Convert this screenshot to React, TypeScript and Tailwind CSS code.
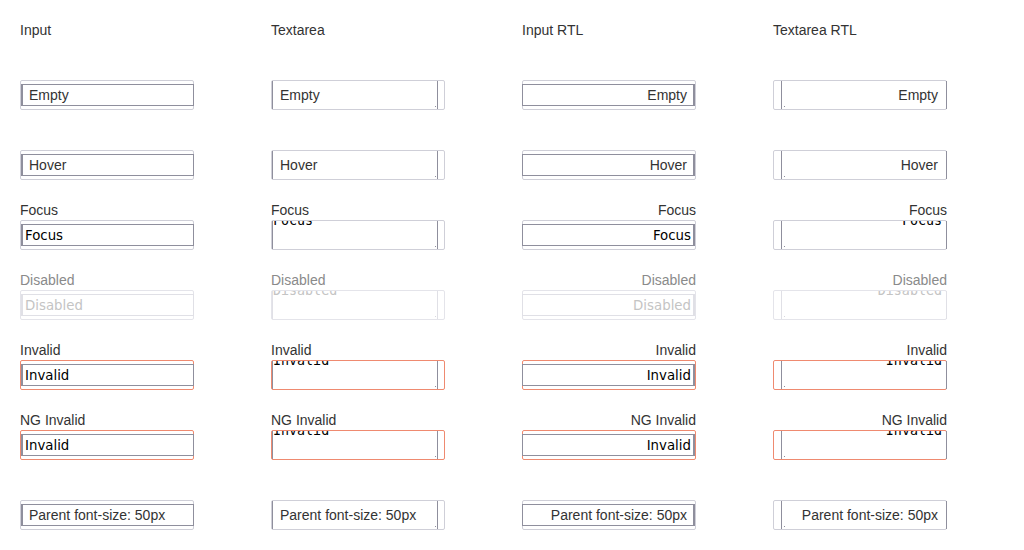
type State = "empty" | "hover" | "focus" | "disabled" | "invalid" | "ng" | "parent";

interface Row {
  state: State;
  label: string;
  text: string;
}

const rows: Row[] = [
  { state: "empty", label: "", text: "Empty" },
  { state: "hover", label: "", text: "Hover" },
  { state: "focus", label: "Focus", text: "Focus" },
  { state: "disabled", label: "Disabled", text: "Disabled" },
  { state: "invalid", label: "Invalid", text: "Invalid" },
  { state: "ng", label: "NG Invalid", text: "Invalid" },
  { state: "parent", label: "", text: "Parent font-size: 50px" },
];

const columns = [
  { title: "Input", kind: "input", rtl: false },
  { title: "Textarea", kind: "textarea", rtl: false },
  { title: "Input RTL", kind: "input", rtl: true },
  { title: "Textarea RTL", kind: "textarea", rtl: true },
] as const;

// placeholder-looking rows use the page font, the rest look like typed values
const isPlain = (s: State) => s === "empty" || s === "hover" || s === "parent";

function outerBorder(s: State) {
  if (s === "invalid" || s === "ng") return "border-[#ef8a70]";
  if (s === "disabled") return "border-[#e4e4ea]";
  return "border-[#cfcfd8]";
}

function innerBorder(s: State) {
  return s === "disabled" ? "border-[#e0e0e6]" : "border-[#8f8f9d]";
}

function InputBox({ row, rtl }: { row: Row; rtl: boolean }) {
  const plain = isPlain(row.state);
  const textCls = plain
    ? "font-['Liberation_Sans'] text-[14px] text-[#333]"
    : row.state === "disabled"
      ? "pt-[2px] font-['DejaVu_Sans'] text-[13.33px] text-[#c4c4c4]"
      : "pt-[2px] font-['DejaVu_Sans'] text-[13.33px] text-black";
  const pad = rtl ? (plain ? "pr-[6px]" : "pr-[2px]") : plain ? "pl-[6px]" : "pl-[2px]";

  return (
    <div className={`h-[30px] w-[174px] rounded-[2px] border ${outerBorder(row.state)}`}>
      <div
        className={`mt-[3px] flex h-[22px] items-center whitespace-nowrap border-y ${innerBorder(row.state)} ${
          rtl ? "ml-[-1px] justify-end border-l border-r-2" : "mr-[-1px] border-l-2 border-r"
        } ${pad} ${textCls}`}
      >
        {row.text}
      </div>
    </div>
  );
}

function TextareaBox({ row, rtl }: { row: Row; rtl: boolean }) {
  const plain = isPlain(row.state);
  const dotColor = row.state === "disabled" ? "bg-[#d8d8de]" : "bg-[#8f8f9d]";

  return (
    <div className={`flex h-[30px] w-[174px] rounded-[2px] border ${outerBorder(row.state)}`}>
      <div
        className={`relative h-full overflow-hidden border-x ${innerBorder(row.state)} ${
          rtl ? "ml-[7px] mr-[-1px] flex-1" : "w-[166px]"
        }`}
      >
        {plain ? (
          <div
            className={`flex h-full items-center whitespace-nowrap font-['Liberation_Sans'] text-[14px] text-[#333] ${
              rtl ? "justify-end pr-[8px]" : "pl-[7px]"
            }`}
          >
            {row.text}
          </div>
        ) : (
          <div
            className={`mt-[-8px] whitespace-nowrap font-['DejaVu_Sans_Mono'] text-[13.33px] leading-[16px] ${
              row.state === "disabled" ? "text-[#c4c4c4]" : "text-black"
            } ${rtl ? "pr-[4px] text-right" : "pl-0"}`}
          >
            {row.text}
          </div>
        )}
        <span
          className={`absolute bottom-[2px] h-px w-px ${dotColor} ${rtl ? "left-[2px]" : "right-[1px]"}`}
        />
      </div>
    </div>
  );
}

export default function App() {
  return (
    <div className="h-[550px] w-[1024px] bg-white pl-[20px] pt-[20px] font-['Liberation_Sans'] text-[14px] text-[#333]">
      <div className="grid grid-cols-4">
        {columns.map((col) => (
          <div key={col.title} className="flex flex-col">
            <div className="h-[20px] leading-[20px]">{col.title}</div>
            <div className="mt-[20px] flex flex-col gap-[20px]">
              {rows.map((row) => (
                <div key={row.state} className="flex w-[174px] flex-col">
                  <div
                    className={`h-[20px] whitespace-nowrap leading-[20px] ${
                      col.rtl ? "text-right" : ""
                    } ${row.state === "disabled" ? "text-[#8a8a8a]" : "text-[#333]"}`}
                  >
                    {row.label}
                  </div>
                  {col.kind === "input" ? (
                    <InputBox row={row} rtl={col.rtl} />
                  ) : (
                    <TextareaBox row={row} rtl={col.rtl} />
                  )}
                </div>
              ))}
            </div>
          </div>
        ))}
      </div>
    </div>
  );
}
